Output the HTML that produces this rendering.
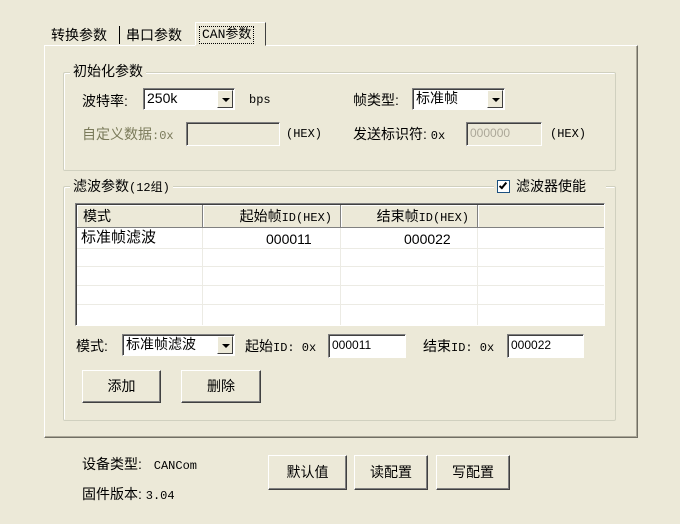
<!DOCTYPE html>
<html><head><meta charset="utf-8"><style>
*{box-sizing:border-box;margin:0;padding:0}
body{width:680px;height:524px;background:#ECE9D8;position:relative;overflow:hidden;font-family:"Liberation Sans","Noto Sans CJK SC","WenQuanYi Zen Hei",sans-serif;font-size:14px;color:#000}
.a{position:absolute;white-space:nowrap;line-height:16px}
.m{font-family:"Liberation Mono","Noto Sans CJK SC",monospace;font-size:12px}
.panel{position:absolute;left:44px;top:45px;width:594px;height:393px;border:1px solid;border-color:#fff #716f64 #716f64 #fff;box-shadow:inset -1px -1px 0 #aca899}
.grp{position:absolute;border:1px solid #d0d0bf;box-shadow:inset 1px 1px 0 #fff;border-radius:2px}
.lg{position:absolute;background:#ECE9D8;padding:0 3px;line-height:16px}
.inp{position:absolute;background:#fff;border:1px solid;border-color:#808080 #fff #fff #808080;box-shadow:inset 1px 1px 0 #404040;font-size:12px;line-height:18px;padding-left:3px}
.dis{background:#ECE9D8;color:#aca899}
.cb{position:absolute;background:#fff;border:1px solid;border-color:#808080 #fff #fff #808080;box-shadow:inset 1px 1px 0 #404040;line-height:18px;padding-left:3px}
.cb .b{position:absolute;right:1px;top:1px;width:16px;bottom:1px;background:#ECE9D8;border:1px solid;border-color:#fff #404040 #404040 #fff}
.cb .b:after{content:"";position:absolute;left:4px;top:7px;border-left:4px solid transparent;border-right:4px solid transparent;border-top:4px solid #000}
.btn{position:absolute;background:#ECE9D8;border:1px solid;border-color:#fff #404040 #404040 #fff;box-shadow:inset -1px -1px 0 #808080;text-align:center}
.lst{position:absolute;left:75px;top:203px;width:530px;height:123px;background:#fff;border:1px solid;border-color:#808080 #fff #fff #808080;box-shadow:inset 1px 1px 0 #404040;overflow:hidden}
.hd{position:absolute;top:1px;height:23px;background:#ECE9D8;border-right:1px solid #808080;border-bottom:1px solid #808080;box-shadow:inset 1px 1px 0 #fff;line-height:22px;padding-left:6px}
.hl{position:absolute;left:1px;right:0;height:1px;background:#ecebe4}
.vl{position:absolute;top:24px;bottom:0;width:1px;background:#ecebe4}
</style></head><body>
<div class="a" style="left:51px;top:27px">转换参数</div>
<div class="a" style="left:119px;top:26px;width:1px;height:18px;background:#000"></div>
<div class="a" style="left:126px;top:27px">串口参数</div>
<div class="a" style="left:195px;top:22px;width:71px;height:24px;border:1px solid;border-color:#fff #404040 transparent #fff;background:#ECE9D8;z-index:2"></div>
<div class="a m" style="left:200px;top:27px;z-index:3;outline:1px dotted #000;padding:0 2px;font-size:13px">CAN参数</div>
<div class="panel"></div>

<div class="grp" style="left:63px;top:72px;width:553px;height:99px"></div>
<div class="lg" style="left:70px;top:63px">初始化参数</div>
<div class="a" style="left:82px;top:93px">波特率:</div>
<div class="cb" style="left:143px;top:88px;width:92px;height:22px">250k<div class="b"></div></div>
<div class="a m" style="left:249px;top:92px">bps</div>
<div class="a" style="left:82px;top:126px;color:#7a7a5a">自定义数据<span class="m">:0x</span></div>
<div class="inp dis" style="left:186px;top:122px;width:94px;height:24px"></div>
<div class="a m" style="left:286px;top:126px">(HEX)</div>
<div class="a" style="left:353px;top:92px">帧类型:</div>
<div class="cb" style="left:412px;top:88px;width:93px;height:22px">标准帧<div class="b"></div></div>
<div class="a" style="left:353px;top:126px">发送标识符: <span class="m">0x</span></div>
<div class="inp dis" style="left:466px;top:122px;width:76px;height:24px;line-height:20px">000000</div>
<div class="a m" style="left:550px;top:126px">(HEX)</div>

<div class="grp" style="left:63px;top:186px;width:553px;height:235px"></div>
<div class="lg" style="left:70px;top:178px">滤波参数<span class="m">(12组)</span></div>
<div class="lg" style="left:494px;top:178px;padding-right:20px"><span style="display:inline-block;width:13px;height:13px;border:1px solid #1c5180;background:#fff;vertical-align:-2px;position:relative;margin-right:6px"><span style="position:absolute;left:3px;top:0;width:4px;height:8px;border:solid #000;border-width:0 2px 2px 0;transform:rotate(40deg)"></span></span>滤波器使能</div>

<div class="lst">
<div class="hd" style="left:1px;width:126px">模式</div>
<div class="hd" style="left:127px;width:138px;text-align:right;padding-right:8px">起始帧<span class="m">ID(HEX)</span></div>
<div class="hd" style="left:265px;width:137px;text-align:right;padding-right:8px">结束帧<span class="m">ID(HEX)</span></div>
<div class="hd" style="left:402px;width:130px"></div>
<div class="hl" style="top:44px"></div><div class="hl" style="top:62px"></div><div class="hl" style="top:81px"></div><div class="hl" style="top:100px"></div>
<div class="vl" style="left:126px"></div><div class="vl" style="left:264px"></div><div class="vl" style="left:401px"></div>
<div class="a" style="left:5px;top:26px;font-size:15px">标准帧滤波</div>
<div class="a" style="left:190px;top:27px">000011</div>
<div class="a" style="left:328px;top:27px">000022</div>
</div>

<div class="a" style="left:76px;top:338px">模式:</div>
<div class="cb" style="left:122px;top:334px;width:113px;height:22px">标准帧滤波<div class="b"></div></div>
<div class="a" style="left:245px;top:338px">起始<span class="m">ID: 0x</span></div>
<div class="inp" style="left:328px;top:334px;width:78px;height:24px;line-height:20px">000011</div>
<div class="a" style="left:423px;top:338px">结束<span class="m">ID: 0x</span></div>
<div class="inp" style="left:507px;top:334px;width:77px;height:24px;line-height:20px">000022</div>

<div class="btn" style="left:82px;top:370px;width:79px;height:33px;line-height:31px">添加</div>
<div class="btn" style="left:181px;top:370px;width:80px;height:33px;line-height:31px">删除</div>

<div class="a" style="left:82px;top:456px">设备类型: <span class="m" style="margin-left:8px">CANCom</span></div>
<div class="a" style="left:82px;top:486px">固件版本: <span class="m">3.04</span></div>
<div class="btn" style="left:268px;top:455px;width:79px;height:35px;line-height:33px">默认值</div>
<div class="btn" style="left:354px;top:455px;width:74px;height:35px;line-height:33px">读配置</div>
<div class="btn" style="left:436px;top:455px;width:74px;height:35px;line-height:33px">写配置</div>
</body></html>
